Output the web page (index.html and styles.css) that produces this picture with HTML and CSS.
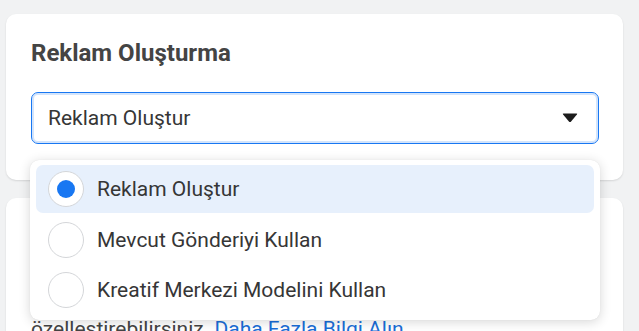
FILE: index.html
```html
<!DOCTYPE html>
<html lang="tr">
<head>
<meta charset="utf-8">
<title>Reklam Oluşturma</title>
<link rel="stylesheet" href="styles.css">
</head>
<body>
<div class="page">
  <section class="card card-create">
    <h2 class="card-title">Reklam Oluşturma</h2>
    <div class="select">
      <span class="select-value">Reklam Oluştur</span>
      <svg class="select-arrow" width="16" height="10" viewBox="0 0 16 10" aria-hidden="true">
        <path d="M1.6 0.5 H14.4 Q15.8 0.5 14.9 1.6 L9.1 8.4 Q8 9.6 6.9 8.4 L1.1 1.6 Q0.2 0.5 1.6 0.5 Z" fill="#1c1c1c"/>
      </svg>
    </div>
  </section>

  <section class="card card-second">
    <p class="card-text">özelleştirebilirsiniz. <a class="link" href="#">Daha Fazla Bilgi Alın</a></p>
  </section>

  <div class="menu" role="listbox">
    <div class="menu-item is-selected" role="option">
      <span class="radio"><span class="radio-dot"></span></span>
      <span class="menu-label">Reklam Oluştur</span>
    </div>
    <div class="menu-item" role="option">
      <span class="radio"></span>
      <span class="menu-label">Mevcut Gönderiyi Kullan</span>
    </div>
    <div class="menu-item" role="option">
      <span class="radio"></span>
      <span class="menu-label">Kreatif Merkezi Modelini Kullan</span>
    </div>
  </div>
</div>
</body>
</html>
```

FILE: styles.css
```css
* { box-sizing: border-box; }

html, body {
  margin: 0;
  height: 100%;
  overflow: hidden;
}

body {
  background: #f1f2f3;
  font-family: Roboto, "Liberation Sans", Arial, sans-serif;
  color: #333333;
}

.page {
  position: relative;
  padding: 14px 16px 0 6px;
}

.card {
  background: #ffffff;
  border-radius: 10px;
  box-shadow: 0 1px 2px rgba(0, 0, 0, 0.12);
}

.card-create {
  height: 166px;
  padding: 25px 24px 0 25px;
}

.card-title {
  margin: 0;
  font-size: 24px;
  line-height: 28px;
  font-weight: 700;
  color: #444444;
}

.select {
  margin-top: 25px;
  height: 52px;
  border: 1px solid #1877f2;
  border-radius: 7px;
  box-shadow: inset 0 0 0 2px #d3e4fb;
  display: flex;
  align-items: center;
  justify-content: space-between;
  padding: 0 20px 0 16px;
}

.select-value {
  font-size: 21px;
  color: #363636;
}

.select-arrow {
  display: block;
}

.card-second {
  margin-top: 18px;
  height: 200px;
  padding: 118px 24px 0 25px;
}

.card-text {
  margin: 0;
  font-size: 21px;
  line-height: 26px;
  color: #444444;
}

.link {
  color: #1a6ed8;
  text-decoration: none;
}

.menu {
  position: absolute;
  top: 160px;
  left: 30px;
  width: 570px;
  height: 160px;
  background: #ffffff;
  border-radius: 9px;
  box-shadow: 0 2px 12px rgba(0, 0, 0, 0.16), 0 0 1px rgba(0, 0, 0, 0.1);
  padding: 5px 6px;
  display: flex;
  flex-direction: column;
}

.menu-item {
  height: 50px;
  display: flex;
  align-items: center;
  gap: 13px;
  padding: 0 12px;
  border-radius: 7px;
}

.menu-item.is-selected {
  background: #e7f0fc;
  height: 48px;
  margin-bottom: 2px;
}

.radio {
  width: 36px;
  height: 36px;
  flex: none;
  border-radius: 50%;
  border: 1px solid #d4d6d9;
  background: #ffffff;
  display: flex;
  align-items: center;
  justify-content: center;
}

.radio-dot {
  width: 18px;
  height: 18px;
  border-radius: 50%;
  background: #1877f2;
}

.menu-label {
  font-size: 21px;
  color: #363636;
}
```
